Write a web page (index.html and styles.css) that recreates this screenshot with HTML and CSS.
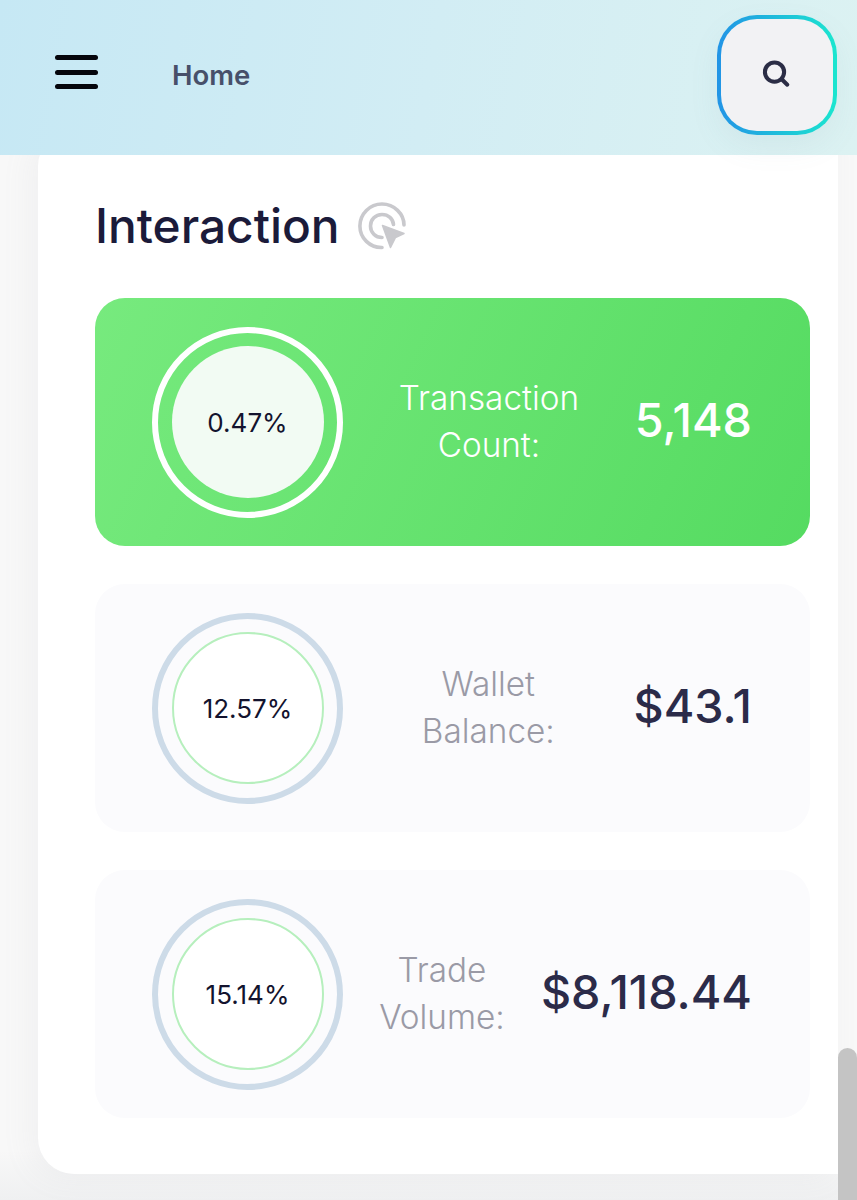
FILE: index.html
```html
<!DOCTYPE html>
<html lang="en">
<head>
<meta charset="utf-8">
<title>Home</title>
<link rel="stylesheet" href="styles.css">
</head>
<body>
<div class="page">
  <header class="topbar">
    <div class="menu"><span></span><span></span><span></span></div>
    <div class="crumb">Home</div>
    <button class="search" aria-label="Search">
      <svg width="32" height="32" viewBox="0 0 30 30" fill="none" stroke="#2b2d45" stroke-width="3.8" stroke-linecap="round">
        <circle cx="13.6" cy="13.2" r="9"/>
        <path d="M20.6 20.2l5 4.8"/>
      </svg>
    </button>
  </header>
  <main class="card">
    <div class="title">
      <h1>Interaction</h1>
      <svg width="48" height="48" viewBox="0 0 48 48" fill="none" stroke="#c9c9cd" stroke-width="3.6" stroke-linecap="round">
        <path d="M24 45.5C11.8 45.8 1.900 36 1.900 24S11.800 2 24 2s22 9.900 22 21"/>
        <path d="M24 35.500C17.500 35.500 12.500 30.500 12.500 24S17.500 12.500 24 12.500 35 17 35.500 22.500"/>
        <path d="M24.500 23.500L46 31.500 37.500 35.500 32.500 45.500Z" fill="#c9c9cd" stroke="#c9c9cd" stroke-width="1.500" stroke-linejoin="round"/>
      </svg>
    </div>
    <section class="stat stat-on">
      <div class="ring"><div class="disc">0.47%</div></div>
      <div class="label">Transaction<br>Count:</div>
      <div class="value">5,148</div>
    </section>
    <section class="stat">
      <div class="ring"><div class="disc">12.57%</div></div>
      <div class="label">Wallet<br>Balance:</div>
      <div class="value">$43.1</div>
    </section>
    <section class="stat">
      <div class="ring"><div class="disc">15.14%</div></div>
      <div class="label">Trade<br>Volume:</div>
      <div class="value">$8,118.44</div>
    </section>
  </main>
  <div class="thumb"></div>
</div>
</body>
</html>
```
FILE: styles.css
```css
* { box-sizing: border-box; }
html, body { margin: 0; height: 100%; overflow: hidden; }
body { background: #f7f7f8; font-family: "Inter", "Liberation Sans", sans-serif; }
.page { position: relative; width: 857px; height: 1200px; overflow: hidden; background: linear-gradient(to bottom, #f8f8f8 0, #f8f8f8 1150px, #eff0f1 1200px); }
.topbar {
  position: relative; z-index: 2; height: 155px; display: flex; align-items: center;
  padding: 0 20px 5px 55px;
  background: linear-gradient(100deg, #c6e8f4 0%, #d2edf4 50%, #dcf2f2 100%);
}
.menu { width: 43px; display: flex; flex-direction: column; gap: 9.500px; margin-top: -6px; }
.menu span { display: block; height: 5px; border-radius: 3px; background: #05060c; }
.crumb { margin-left: 74px; font-size: 27.500px; font-weight: 600; color: #47506a; }
.search {
  margin-left: auto; width: 120px; height: 120px; border-radius: 40px; padding: 0;
  border: 4px solid transparent; display: flex; align-items: center; justify-content: center;
  background: linear-gradient(#f2f2f4, #f2f2f4) padding-box, linear-gradient(to right, #2294e6, #1be6cf) border-box;
  box-shadow: 0 12px 30px rgba(120, 140, 150, .08);
}
.search svg { margin: -2px 2px 0 0; }
.card {
  position: relative; z-index: 1; width: 800px; height: 1044px; margin: -25px 0 0 38px;
  padding: 69px 28px 0 57px; background: #fff; border-radius: 36px 0 0 36px;
  box-shadow: -8px 4px 30px rgba(150, 155, 160, .08);
}
.title { display: flex; align-items: center; gap: 18px; height: 54px; margin-bottom: 45px; }
.title h1 { margin: 0; font-size: 47.800px; line-height: 54px; font-weight: 450; color: #1b1b3a; }
.stat {
  height: 248px; margin-bottom: 38px; padding: 0 58px 0 57px; border-radius: 30px;
  display: flex; align-items: center; background: #fbfbfd;
}
.stat-on { background: linear-gradient(115deg, #77ea7e 0%, #55db61 100%); }
.ring { flex: none; width: 191px; height: 191px; border-radius: 50%; border: 6px solid #cddbe8; display: flex; align-items: center; justify-content: center; }
.stat-on .ring { border-color: #fff; }
.disc { width: 152px; height: 152px; border-radius: 50%; border: 2px solid #b6efbd; display: flex; align-items: center; justify-content: center; font-size: 26px; color: #13132e; background: #fff; }
.stat-on .disc { border: 0; background: #f2fbf3; }
.label { flex: 1; text-align: center; font-size: 33.300px; line-height: 47px; font-weight: 300; color: #9a9aa6; }
.stat-on .label { color: #fff; }
.value { flex: none; margin-top: -5px; font-size: 46.700px; font-weight: 500; color: #2b2b49; }
.stat-on .value { color: #fff; }
.thumb { position: absolute; z-index: 3; left: 838px; top: 1048px; width: 19px; height: 152px; background: #c4c4c4; border-radius: 10px 10px 0 0; }
```
